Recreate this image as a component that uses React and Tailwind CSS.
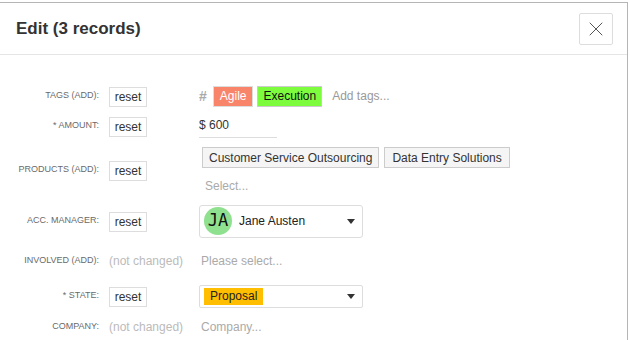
import { X } from 'lucide-react';

const Label = ({ children }) => (
  <div className="w-[99px] shrink-0 text-right text-[9px] uppercase text-[#6a6a6a]">{children}</div>
);

const Reset = () => (
  <div className="w-[100px] shrink-0 pl-[10px]">
    <button className="h-[20px] w-[38px] border border-[#ddd] bg-white text-[12px] leading-none text-[#333]">
      reset
    </button>
  </div>
);

const NotChanged = () => (
  <div className="w-[100px] shrink-0 pl-[10px] text-[12px] whitespace-nowrap text-[#bbb]">(not changed)</div>
);

const Caret = () => (
  <svg width="8" height="5" viewBox="0 0 8 5" className="ml-auto mr-[7px]">
    <path d="M0 0h8L4 5z" fill="#333" />
  </svg>
);

export default function App() {
  return (
    <div className="w-[630px] h-[340px] overflow-hidden bg-white pt-[2px] font-['Liberation_Sans',Arial,sans-serif]">
      <div className="w-[628px] h-[338px] border-t border-r border-[#b5b5b5] bg-white">
        {/* header */}
        <div className="flex h-[52px] items-center justify-between border-b border-[#e5e5e5] pl-[16px] pr-[14px]">
          <h1 className="text-[17px] font-bold text-[#333]">Edit (3 records)</h1>
          <button className="flex h-[32px] w-[34px] items-center justify-center rounded-[2px] border border-[#ddd] bg-white text-[#555]">
            <X size={24} strokeWidth={1} />
          </button>
        </div>

        {/* body */}
        <div className="pt-[26px]">
          <div className="flex h-[30px] items-center">
            <Label>Tags (add):</Label>
            <Reset />
            <div className="flex items-center text-[12px]">
              <span className="mr-[6px] text-[14px] font-bold text-[#aaa]">#</span>
              <span className="flex h-[21px] items-center border border-[#ddd] bg-[#f8856a] px-[6px] text-white">Agile</span>
              <span className="ml-[4px] flex h-[21px] items-center border border-[#ccc] bg-[#7dfc3e] px-[5px] text-[#111]">Execution</span>
              <span className="ml-[10px] text-[#999]">Add tags...</span>
            </div>
          </div>

          <div className="flex h-[30px] items-center">
            <Label>* Amount:</Label>
            <Reset />
            <div className="w-[78px] border-b border-[#ddd] pb-[3px] pt-[2px] text-[12px] text-[#333]">$ 600</div>
          </div>

          <div className="flex h-[58px] items-center">
            <Label>Products (add):</Label>
            <Reset />
            <div className="flex h-full flex-col pl-[3px] pt-[6px] text-[12px]">
              <div className="flex gap-[5px]">
                <span className="flex h-[21px] items-center border border-[#ccc] bg-[#f5f5f5] px-[6px] text-[#333]">Customer Service Outsourcing</span>
                <span className="flex h-[21px] items-center border border-[#ccc] bg-[#f5f5f5] px-[7px] text-[#333]">Data Entry Solutions</span>
              </div>
              <span className="mt-[9px] pl-[3px] text-[#aaa]">Select...</span>
            </div>
          </div>

          <div className="flex h-[44px] items-center">
            <Label>Acc. manager:</Label>
            <Reset />
            <div className="flex h-[33px] w-[164px] items-center rounded-[3px] border border-[#ddd] pl-[4px] text-[12px] text-[#222]">
              <span className="flex h-[28px] w-[28px] items-center justify-center rounded-full bg-[#8fe08f] font-['DejaVu_Sans_Mono',monospace] text-[17px] text-[#111]">JA</span>
              <span className="ml-[7px]">Jane Austen</span>
              <Caret />
            </div>
          </div>

          <div className="flex h-[36px] items-center">
            <Label>Involved (add):</Label>
            <NotChanged />
            <span className="pl-[2px] text-[12px] text-[#aaa]">Please select...</span>
          </div>

          <div className="flex h-[34px] items-center">
            <Label>* State:</Label>
            <Reset />
            <div className="flex h-[23px] w-[164px] items-center rounded-[2px] border border-[#ddd] pl-[4px] text-[12px]">
              <span className="flex h-[17px] items-center bg-[#ffbf00] px-[6px] text-[#222]">Proposal</span>
              <Caret />
            </div>
          </div>

          <div className="flex h-[28px] items-center">
            <Label>Company:</Label>
            <NotChanged />
            <span className="pl-[2px] text-[12px] text-[#aaa]">Company...</span>
          </div>
        </div>
      </div>
    </div>
  );
}
